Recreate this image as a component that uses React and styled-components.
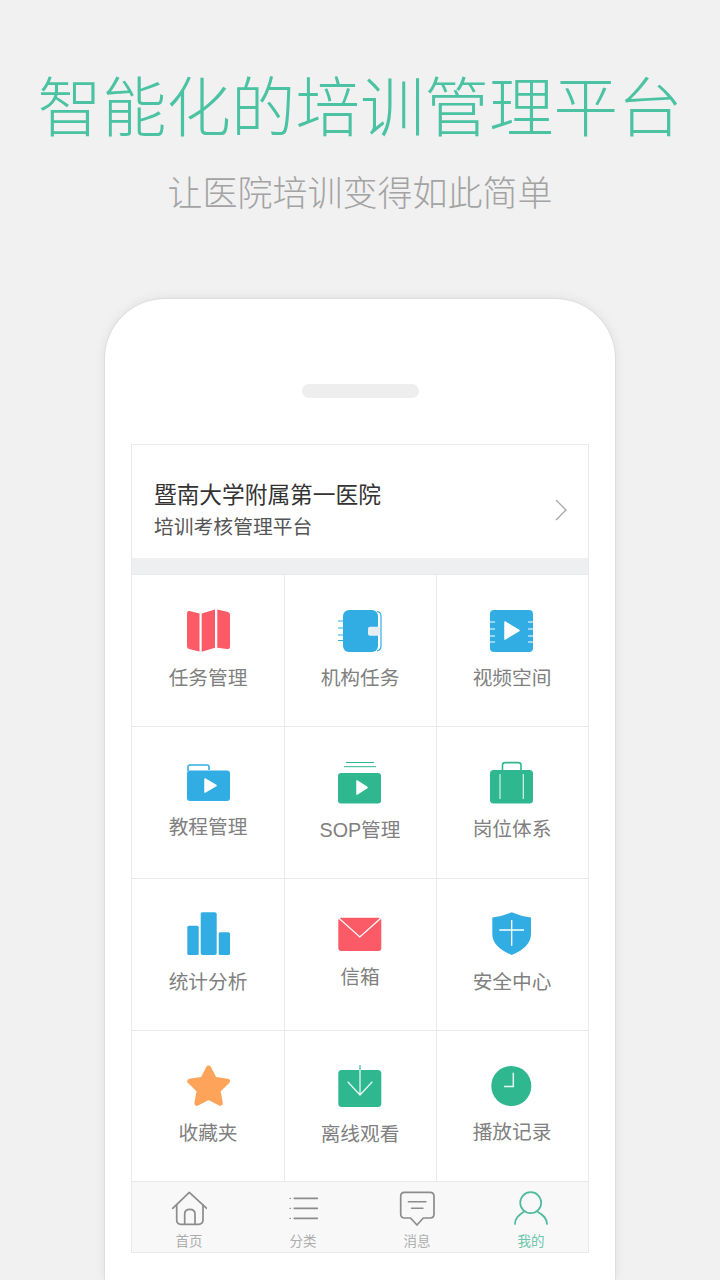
import React from 'react';
import styled, { createGlobalStyle } from 'styled-components';

const Global = createGlobalStyle`
  html, body { margin: 0; padding: 0; background: #f1f1f1; }
  body { font-family: "Noto Sans CJK SC", "Noto Sans", sans-serif; }
`;

const Page = styled.div`
  width: 720px;
  height: 1280px;
  overflow: hidden;
  display: flex;
  flex-direction: column;
  align-items: center;
  background: #f1f1f1;
`;
const Title = styled.h1`
  margin: 63px 0 0;
  font-size: 64.5px;
  line-height: 80px;
  font-weight: 300;
  color: #4bc3a3;
  white-space: nowrap;
`;
const Subtitle = styled.p`
  margin: 27px 0 0;
  font-size: 35px;
  line-height: 42px;
  font-weight: 300;
  color: #a3a3a3;
  white-space: nowrap;
`;
const Phone = styled.div`
  flex: none;
  box-sizing: border-box;
  width: 510px;
  height: 981px;
  margin-top: 87px;
  padding-top: 85px;
  display: flex;
  flex-direction: column;
  align-items: center;
  background: #fff;
  border-radius: 60px 60px 0 0;
  box-shadow: 0 0 0 1px rgba(0, 0, 0, 0.04), 0 0 12px rgba(0, 0, 0, 0.09);
`;
const Speaker = styled.div`
  width: 117px;
  height: 14px;
  border-radius: 7px;
  background: #eeeeee;
`;
const Screen = styled.div`
  box-sizing: border-box;
  width: 458px;
  margin-top: 46px;
  border: 1px solid #e9e9e9;
  border-top-color: #ececec;
`;
const Header = styled.div`
  box-sizing: border-box;
  height: 113px;
  padding: 35px 20px 0 22px;
  display: flex;
  justify-content: space-between;
  align-items: flex-start;
`;
const HospitalName = styled.div`
  font-size: 22.7px;
  line-height: 28px;
  color: #333;
  white-space: nowrap;
`;
const HospitalSub = styled.div`
  margin-top: 7px;
  font-size: 19.8px;
  line-height: 22px;
  color: #555;
  white-space: nowrap;
`;
const Chevron = styled.svg`
  width: 14px;
  height: 22px;
  margin-top: 19px;
  fill: none;
  stroke: #a8a8a8;
  stroke-width: 1.3;
`;
const Band = styled.div`
  height: 16px;
  background: #eeeff1;
`;
const Grid = styled.div`
  display: grid;
  grid-template-columns: 152px 152px 152px;
  grid-template-rows: 152px 152px 152px 151px;
`;
const Cell = styled.div`
  box-sizing: border-box;
  padding-top: ${p => p.$top}px;
  padding-right: ${p => (p.$first ? 0 : 1)}px;
  display: flex;
  flex-direction: column;
  align-items: center;
  border-top: 1px solid #e9e9e9;
  border-left: ${p => (p.$first ? 'none' : '1px solid #e9e9e9')};
`;
const CellIcon = styled.svg`
  flex: none;
  width: 44px;
  height: 44px;
`;
const CellLabel = styled.span`
  margin-top: ${p => p.$gap}px;
  font-family: "Liberation Sans", "Noto Sans CJK SC", sans-serif;
  font-size: 19.7px;
  line-height: 24px;
  color: #808080;
  white-space: nowrap;
`;
const TabBar = styled.div`
  box-sizing: border-box;
  height: 71px;
  padding-top: 9px;
  display: grid;
  grid-template-columns: repeat(4, 1fr);
  background: #f8f8f8;
  border-top: 1px solid #e9e9e9;
`;
const Tab = styled.div`
  display: flex;
  flex-direction: column;
  align-items: center;
  color: ${p => (p.$active ? '#6cc7ac' : '#adadad')};
`;
const TabIcon = styled.svg`
  width: 36px;
  height: 36px;
  fill: none;
  stroke: ${p => (p.$active ? '#4fbb9c' : '#8c8c8c')};
  stroke-width: 1.7;
  stroke-linecap: round;
  stroke-linejoin: round;
`;
const TabLabel = styled.span`
  margin-top: 5px;
  font-size: 13.5px;
  line-height: 16px;
  white-space: nowrap;
`;

const RED = '#fb5a67';
const BLUE = '#31ade4';
const GREEN = '#2fb88f';
const ORANGE = '#fda35a';

const Play = ({ d }) => <path fill="#fff" stroke="#fff" strokeWidth="1.5" strokeLinejoin="round" d={d} />;

const MapIcon = () => (
  <CellIcon viewBox="0 0 44 44">
    <path fill={RED} d="M3.5 2 L13.5 4.5 V42.5 L3 40 Q1 39.4 1 37 V4.5 Q1 1.5 3.5 2Z" />
    <path fill={RED} d="M15.7 4.5 L29 0.5 V38.8 L15.7 42.7Z" />
    <path fill={RED} d="M31.3 0.6 L41 2.7 Q44 3.3 44 6 V38 Q44 40.6 41 40 L31.3 38.8Z" />
  </CellIcon>
);
const NotebookIcon = () => (
  <CellIcon viewBox="0 0 44 44">
    <rect x="5" y="1" width="35" height="42" rx="6" fill={BLUE} />
    <path stroke={BLUE} strokeWidth="1.2" fill="none" d="M0 12H5M0 19H5M0 26H5M0 31.5H5M39 2.5Q43 3 43 7V37Q43 41 39 42" />
    <rect x="30" y="17.7" width="12" height="9" rx="2" fill="#e6eef2" />
  </CellIcon>
);
const VideoIcon = () => (
  <CellIcon viewBox="0 0 44 44">
    <rect x="0" y="1" width="43" height="42" rx="4" fill={BLUE} />
    <path stroke="#fff" strokeWidth="1.2" d="M0 13H5M0 20H5M0 27H5M0 33H5M38 13H43M38 20H43M38 27H43M38 33H43" />
    <Play d="M15 13 L29 21.5 L15 30Z" />
  </CellIcon>
);
const FolderIcon = () => (
  <CellIcon viewBox="0 0 44 44">
    <path fill="none" stroke={BLUE} strokeWidth="1.6" d="M2 10V6Q2 4 4 4H21Q23 4 23 6V9" />
    <rect x="1" y="9.5" width="43" height="30.5" rx="3" fill={BLUE} />
    <Play d="M19 18 L30 24.5 L19 31Z" />
  </CellIcon>
);
const StackIcon = () => (
  <CellIcon viewBox="0 0 44 44">
    <path stroke={GREEN} strokeWidth="1" d="M8 1.5H36M6 5.7H38" />
    <rect x="0" y="12" width="43" height="30.5" rx="3" fill={GREEN} />
    <Play d="M19 20 L29 26.5 L19 33Z" />
  </CellIcon>
);
const CaseIcon = () => (
  <CellIcon viewBox="0 0 44 44">
    <path fill="none" stroke={GREEN} strokeWidth="1.6" d="M12.5 9.5V4Q12.5 1.6 15 1.6H28.5Q31 1.6 31 4V9.5" />
    <rect x="0" y="9" width="43" height="33.5" rx="3.5" fill={GREEN} />
    <path stroke="#d8f1e8" strokeWidth="1.2" d="M10 13V38M33.3 13V38" />
  </CellIcon>
);
const BarsIcon = () => (
  <CellIcon viewBox="0 0 44 44">
    <rect x="1.3" y="13.7" width="11.4" height="29.3" rx="1.5" fill={BLUE} />
    <rect x="14.7" y="0.3" width="16" height="42.7" rx="2" fill={BLUE} />
    <rect x="32.7" y="20.3" width="11.3" height="22.7" rx="1.5" fill={BLUE} />
  </CellIcon>
);
const MailIcon = () => (
  <CellIcon viewBox="0 0 44 44">
    <rect x="0.3" y="5.7" width="43" height="33.3" rx="3" fill={RED} />
    <path fill="none" stroke="#fff" strokeWidth="1.3" d="M0.3 5.7 L21.8 25 L43.3 5.7" />
  </CellIcon>
);
const ShieldIcon = () => (
  <CellIcon viewBox="0 0 44 44">
    <path fill={BLUE} d="M21.7 0.3 Q31 4.5 41 5.5 V22 Q41 35 21.7 43 Q2.3 35 2.3 22 V5.5 Q12.5 4.5 21.7 0.3Z" />
    <path stroke="#fff" strokeWidth="1.3" d="M9.3 18H34M21.7 8V33.7" />
  </CellIcon>
);
const StarIcon = () => (
  <CellIcon viewBox="0 0 44 44">
    <path
      fill={ORANGE}
      stroke={ORANGE}
      strokeWidth="5"
      strokeLinejoin="round"
      d="M22.6 3 L28.4 14.2 L41.5 16.2 L32 25.4 L34.3 38.3 L22.6 32.3 L10.9 38.3 L13.2 25.4 L3.8 16.2 L16.8 14.2Z"
    />
  </CellIcon>
);
const DownloadIcon = () => (
  <CellIcon viewBox="0 0 44 44">
    <rect x="0.3" y="5" width="43" height="37" rx="3.5" fill={GREEN} />
    <path stroke={GREEN} strokeWidth="1.1" d="M22 0V5" />
    <path fill="none" stroke="#e4f7f0" strokeWidth="1.3" d="M22 5V30M9.7 16.7 L22 30 L34.3 16.7" />
  </CellIcon>
);
const ClockIcon = () => (
  <CellIcon viewBox="0 0 44 44">
    <circle cx="21.3" cy="21" r="20" fill={GREEN} />
    <path fill="none" stroke="#e4f7f0" strokeWidth="1.5" d="M23.3 7.7V21.5H14" />
  </CellIcon>
);

const items = [
  { label: '任务管理', Icon: MapIcon, top: 34, gap: 13 },
  { label: '机构任务', Icon: NotebookIcon, top: 34, gap: 13 },
  { label: '视频空间', Icon: VideoIcon, top: 34, gap: 13 },
  { label: '教程管理', Icon: FolderIcon, top: 34, gap: 10 },
  { label: 'SOP管理', Icon: StackIcon, top: 34, gap: 13 },
  { label: '岗位体系', Icon: CaseIcon, top: 34, gap: 12 },
  { label: '统计分析', Icon: BarsIcon, top: 33, gap: 14 },
  { label: '信箱', Icon: MailIcon, top: 33, gap: 9 },
  { label: '安全中心', Icon: ShieldIcon, top: 33, gap: 14 },
  { label: '收藏夹', Icon: StarIcon, top: 34, gap: 12 },
  { label: '离线观看', Icon: DownloadIcon, top: 34, gap: 13 },
  { label: '播放记录', Icon: ClockIcon, top: 34, gap: 11 },
];

const tabs = [
  {
    label: '首页',
    icon: (
      <>
        <path d="M1.7 17.3 L18.3 1.3 L35.7 17.3" />
        <path d="M5.7 14V29Q5.7 33.3 10 33.3H27.5Q32 33.3 32 29V14" />
        <path d="M13.7 33V23Q13.7 18.3 18.8 18.3Q24 18.3 24 23V33" />
      </>
    ),
  },
  {
    label: '分类',
    icon: (
      <>
        <path d="M9.3 7.3H32.3M9.3 17.3H32.3M9.3 27.3H32.3" />
        <path strokeWidth="1.2" d="M5 7.3H5.5M5 17.3H5.5M5 27.3H5.5" />
      </>
    ),
  },
  {
    label: '消息',
    icon: (
      <>
        <path d="M5.5 1.3H31Q35 1.3 35 5.3V23Q35 27 31 27H24.3L18 34L11.5 27H5.5Q1.7 27 1.7 23V5.3Q1.7 1.3 5.5 1.3Z" />
        <path strokeWidth="1.4" d="M9.3 10.7H27M12.5 17.3H24" />
      </>
    ),
  },
  {
    label: '我的',
    active: true,
    icon: (
      <>
        <circle cx="17.7" cy="11.7" r="10.5" />
        <path d="M2 33C2 27 6 24 10.5 21M34 33C34 27 30 24 25 21" />
      </>
    ),
  },
];

export default function App() {
  return (
    <Page>
      <Global />
      <Title>智能化的培训管理平台</Title>
      <Subtitle>让医院培训变得如此简单</Subtitle>
      <Phone>
        <Speaker />
        <Screen>
          <Header>
            <div>
              <HospitalName>暨南大学附属第一医院</HospitalName>
              <HospitalSub>培训考核管理平台</HospitalSub>
            </div>
            <Chevron viewBox="0 0 14 22">
              <path d="M2 1 L12 11 L2 21" />
            </Chevron>
          </Header>
          <Band />
          <Grid>
            {items.map(({ label, Icon, top, gap }, i) => (
              <Cell key={label} $top={top} $first={i % 3 === 0}>
                <Icon />
                <CellLabel $gap={gap}>{label}</CellLabel>
              </Cell>
            ))}
          </Grid>
          <TabBar>
            {tabs.map(t => (
              <Tab key={t.label} $active={t.active}>
                <TabIcon viewBox="0 0 36 36" $active={t.active}>
                  {t.icon}
                </TabIcon>
                <TabLabel>{t.label}</TabLabel>
              </Tab>
            ))}
          </TabBar>
        </Screen>
      </Phone>
    </Page>
  );
}
